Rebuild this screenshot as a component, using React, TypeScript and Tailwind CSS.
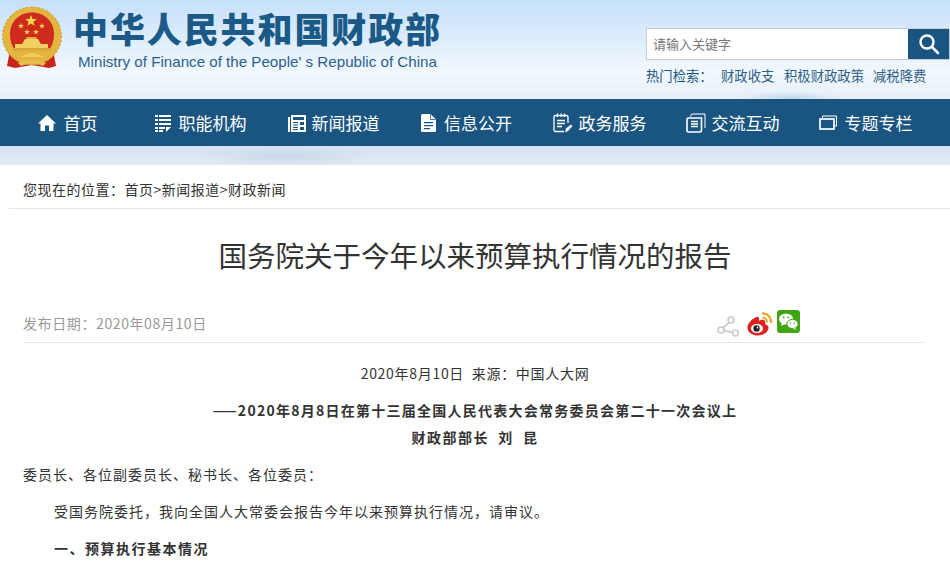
const CJK = "font-['Noto_Sans_CJK_SC','Liberation_Sans',sans-serif]";
const COLON = "\uFF1A";
const COMMA = "\uFF0C";

function Emblem() {
  const star = (cx: number, cy: number, r: number) => {
    const pts: string[] = [];
    for (let i = 0; i < 10; i++) {
      const a = (Math.PI / 5) * i - Math.PI / 2;
      const rr = i % 2 === 0 ? r : r * 0.42;
      pts.push(`${(cx + rr * Math.cos(a)).toFixed(2)},${(cy + rr * Math.sin(a)).toFixed(2)}`);
    }
    return <polygon key={`${cx}-${cy}`} points={pts.join(" ")} fill="#f7d84a" />;
  };
  return (
    <svg width="62" height="64" viewBox="0 0 62 64" className="shrink-0">
      <path d="M9 44 L6 60 L14 62 L31 59 L48 62 L55 60 L52 44 Z" fill="#c8261c" />
      <ellipse cx="31" cy="30" rx="29.5" ry="29" fill="#e3b53f" />
      <ellipse cx="31" cy="30" rx="29.5" ry="29" fill="none" stroke="#c9952c" strokeWidth="1" strokeDasharray="2 2" />
      <path d="M9 28C9 15 19 6.5 31 6.5S53 15 53 28C53 35 51 40 48 44H14C11 40 9 35 9 28Z" fill="#cf2a1e" />
      {star(30, 15, 6)}
      {star(20, 20, 3)}
      {star(41, 20, 3)}
      {star(26, 26, 3)}
      {star(35, 26, 3)}
      <path d="M24 33 L37 33 L40 38 L21 38 Z" fill="#f2cf63" />
      <path d="M26 31 H35 L36 33 H25 Z" fill="#e3b53f" />
      <rect x="14" y="38" width="33" height="4" fill="#f2cf63" />
      <path d="M12 42 H50 V44.5 H12 Z" fill="#d9a838" />
      <path d="M20 51 C26 46 36 46 42 51 Z" fill="#f2cf63" />
      <path d="M17 57 C25 53 37 53 45 57 L42 60 C35 57 27 57 20 60 Z" fill="#e8c050" />
    </svg>
  );
}

function HomeIcon() {
  return (
    <svg width="18" height="18" viewBox="0 0 18 18" fill="#fff">
      <path d="M9 1 L18 9.5 L15.5 9.5 L15.5 17 L11 17 L11 11.5 L7 11.5 L7 17 L2.5 17 L2.5 9.5 L0 9.5 Z" />
    </svg>
  );
}

function ListIcon() {
  return (
    <svg width="16" height="18" viewBox="0 0 16 18" fill="#fff">
      <path d="M0 1h3v2H0zM4 1h12v2H4zM0 5h3v2H0zM4 5h12v2H4zM0 9h3v2H0zM4 9h12v2H4zM0 13h3v2H0zM4 13h6v2H4zM0 16h3v2H0zM4 16h4v2H4zM11 13h5l-5 5z" />
    </svg>
  );
}

function NewsIcon() {
  return (
    <svg width="18" height="18" viewBox="0 0 18 18">
      <path d="M0 3h2v15H0z" fill="#fff" />
      <path d="M3 1h15v17H3z" fill="#fff" />
      <path d="M5 3h11v3H5zM5 8h5v1H5zM5 10.5h5v1H5zM5 13h5v1H5zM12 8h4v3h-4zM12 13h4v3h-4zM5 15h5v1H5z" fill="#1a5582" />
    </svg>
  );
}

function DocIcon() {
  return (
    <svg width="15" height="18" viewBox="0 0 15 18">
      <path d="M1.5 0H9.5L15 5.5V16.5Q15 18 13.5 18H1.5Q0 18 0 16.5V1.5Q0 0 1.5 0Z" fill="#fff" />
      <path d="M3 8h9v1.3H3zM3 11h9v1.3H3zM3 14h6v1.3H3z" fill="#1a5582" />
      <path d="M9.5 0.5V5.5H14.5" fill="none" stroke="#1a5582" strokeWidth="0.8" />
    </svg>
  );
}

function ServiceIcon() {
  return (
    <svg width="20" height="20" viewBox="0 0 20 20" fill="none" stroke="#fff" strokeWidth="1.3">
      <path d="M11 18.5H2.5Q1 18.5 1 17V3.5Q1 2.5 2.5 2.5H13.5Q15 2.5 15 3.5V10" />
      <path d="M4.5 0.5v3.5M8 0.5v3.5M11.5 0.5v3.5" />
      <path d="M4 7.5h8M4 10.5h8M4 13.5h5" />
      <path d="M12 19.5l1-4 5-4 1.5 1.5-4.5 5z" fill="#fff" stroke="none" />
    </svg>
  );
}

function ChatIcon() {
  return (
    <svg width="20" height="20" viewBox="0 0 20 20" fill="none" stroke="#fff">
      <path d="M4.5 3.5Q4.5 1 7 1H19V15" strokeWidth="1" />
      <path d="M2.5 5H15.5V17Q15.5 19 13.5 19H2.5Q1 19 1 17.5V6.5Q1 5 2.5 5Z" strokeWidth="1.6" />
      <path d="M5 8.5h7M5 11h7M5 13.5h7" strokeWidth="1.3" />
    </svg>
  );
}

function TopicIcon() {
  return (
    <svg width="18" height="15" viewBox="0 0 18 15" fill="none" stroke="#fff">
      <path d="M3.5 3V1H17.5V11H15" strokeWidth="1" />
      <rect x="1" y="4" width="14" height="10" strokeWidth="1.7" />
    </svg>
  );
}

function ShareIcon() {
  return (
    <svg width="22" height="21" viewBox="0 0 22 21" fill="none" stroke="#c9c9c9" strokeWidth="1.6">
      <circle cx="14" cy="4" r="3" />
      <circle cx="4" cy="14" r="3" />
      <circle cx="18.5" cy="17" r="3" />
      <path d="M12.3 6.5L6 11.8M6.8 14.6L15.7 16.4" />
    </svg>
  );
}

function WeiboIcon() {
  return (
    <svg width="25" height="24" viewBox="0 0 25 24">
      <path d="M9.5 5C4 7.5 0 12 0.5 16.5C1 21 6.5 23.5 11 23.5C16.5 23.5 21.5 20 21.5 15.8C21.5 13.8 20 12.8 18 12C19 9 17.5 7.5 15 7.8C13.5 8 12.5 8.5 12 8.7C12.5 5.5 11.5 4 9.5 5Z" fill="#dd2122" />
      <ellipse cx="10" cy="16.5" rx="6" ry="4.6" fill="#fff" />
      <circle cx="9.5" cy="16.5" r="3.2" fill="#222" />
      <circle cx="10.5" cy="15.5" r="0.9" fill="#fff" />
      <path d="M15 1.5C20 1 24.5 5 24 11" fill="none" stroke="#f0a41e" strokeWidth="2.2" />
      <path d="M15.5 5.5C18 5.5 20.3 7.5 20 10.5" fill="none" stroke="#f0a41e" strokeWidth="1.8" />
    </svg>
  );
}

function WechatIcon() {
  return (
    <svg width="23" height="23" viewBox="0 0 23 23">
      <rect width="23" height="23" rx="3" fill="#3fa512" />
      <ellipse cx="9" cy="9" rx="7" ry="5.6" fill="#fff" />
      <path d="M5 13l-1 3 4-2z" fill="#fff" />
      <ellipse cx="15.5" cy="14" rx="5.6" ry="4.6" fill="#fff" stroke="#3fa512" strokeWidth="1" />
      <path d="M18 18l1.5 2-3.5-1.5z" fill="#fff" />
      <circle cx="6.6" cy="7.4" r="0.9" fill="#3fa512" />
      <circle cx="11" cy="7.4" r="0.9" fill="#3fa512" />
      <circle cx="13.6" cy="13" r="0.8" fill="#3fa512" />
      <circle cx="17.4" cy="13" r="0.8" fill="#3fa512" />
    </svg>
  );
}

const navItems = [
  { label: "首页", icon: <HomeIcon />, gap: "gap-2" },
  { label: "职能机构", icon: <ListIcon />, gap: "gap-2" },
  { label: "新闻报道", icon: <NewsIcon />, gap: "gap-1.5" },
  { label: "信息公开", icon: <DocIcon />, gap: "gap-2" },
  { label: "政务服务", icon: <ServiceIcon />, gap: "gap-1.5" },
  { label: "交流互动", icon: <ChatIcon />, gap: "gap-1.5" },
  { label: "专题专栏", icon: <TopicIcon />, gap: "gap-2" },
];

export default function App() {
  return (
    <div className={`h-[571px] w-[950px] overflow-hidden bg-white ${CJK}`}>
      <div className="h-[165px] bg-[radial-gradient(ellipse_50px_7px_at_790px_98px,#c5d6ea,transparent),radial-gradient(ellipse_90px_12px_at_285px_156px,#c9d8e9,transparent),linear-gradient(180deg,#c6e0fa_0px,#d8eafc_30px,#f2f8fe_72px,#e6eff8_98px,#d6e3f2_146px,#e2ebf5_165px)]">
        <div className="flex h-[99px] items-start justify-between">
          <div className="flex pl-px pt-[6px]">
            <Emblem />
            <div className="ml-[10px] flex flex-col">
              <div className="-mt-[2px] whitespace-nowrap text-[35px] leading-[47px] font-black tracking-[1.9px] text-[#1b5a87]">
                中华人民共和国财政部
              </div>
              <div className="ml-[5px] mt-[1.5px] whitespace-nowrap font-['Liberation_Sans',sans-serif] text-[15.15px] leading-[18px] text-[#2a628c]">
                Ministry of Finance of the People' s Republic of China
              </div>
            </div>
          </div>
          <div className="w-[304px] pt-[28px]">
            <div className="flex h-[32px] border border-[#cccccc] bg-white">
              <div className="flex-1 pl-[6px] text-[13px] leading-[30px] text-[#777777]">请输入关键字</div>
              <div className="flex w-[41px] items-center justify-center bg-[#1a5582]">
                <svg width="22" height="22" viewBox="0 0 22 22" fill="none" stroke="#fff">
                  <circle cx="9" cy="9" r="6.5" strokeWidth="2.4" />
                  <path d="M14 14L20 20" strokeWidth="2.6" strokeLinecap="round" />
                </svg>
              </div>
            </div>
            <div className="mt-[7px] flex text-[13.33px] leading-[18px] whitespace-nowrap text-[#2d5f87]">
              <span className="w-[75px] text-[#1a5582]">热门检索{COLON}</span>
              <span className="w-[63px]">财政收支</span>
              <span className="w-[89px]">积极财政政策</span>
              <span>减税降费</span>
            </div>
          </div>
        </div>
        <nav className="flex h-[47px] bg-[#1a5582] pl-px">
          {navItems.map((item) => (
            <div key={item.label} className={`flex w-[133px] items-center justify-center text-[17px] text-white ${item.gap}`}>
              {item.icon}
              <span>{item.label}</span>
            </div>
          ))}
        </nav>
      </div>

      <div className="ml-[9px] flex h-[44px] items-center border-b border-[#e5e5e5] pl-[14px] pt-[6px] text-[14px] tracking-[0.5px] text-[#333333]">
        您现在的位置{COLON}首页&gt;新闻报道&gt;财政新闻
      </div>

      <h1 className="pt-[25px] text-center text-[28.5px] leading-[42px] font-normal text-[#333333]">
        国务院关于今年以来预算执行情况的报告
      </h1>

      <div className="ml-[23px] mr-[25px] mt-[33px] flex h-[34px] items-start justify-between border-b border-[#e5e5e5]">
        <div className="pt-[4px] text-[14px] leading-[20px] tracking-[0.6px] text-[#999999]">发布日期{COLON}2020年08月10日</div>
        <div className="mr-[125px] flex items-start">
          <div className="mt-[7px]"><ShareIcon /></div>
          <div className="ml-[8px] mt-[3px]"><WeiboIcon /></div>
          <div className="ml-[5px] mt-px"><WechatIcon /></div>
        </div>
      </div>

      <article className="px-[23px] text-[14px] leading-[37px] tracking-[1px] text-[#333333]">
        <p className="mt-[12px] text-center tracking-[0.7px]">2020年8月10日&nbsp;&nbsp;来源{COLON}中国人大网</p>
        <p className="mt-[5px] text-center leading-[27px] font-bold tracking-[1.25px]">——2020年8月8日在第十三届全国人民代表大会常务委员会第二十一次会议上</p>
        <p className="text-center leading-[27px] font-bold tracking-[1.5px]">财政部部长&nbsp;&nbsp;刘&nbsp;&nbsp;昆</p>
        <p className="mt-[5px]">委员长、各位副委员长、秘书长、各位委员{COLON}</p>
        <p className="pl-[31px]">受国务院委托{COMMA}我向全国人大常委会报告今年以来预算执行情况{COMMA}请审议。</p>
        <p className="pl-[31px] font-bold tracking-[1.5px]">一、预算执行基本情况</p>
      </article>
    </div>
  );
}
